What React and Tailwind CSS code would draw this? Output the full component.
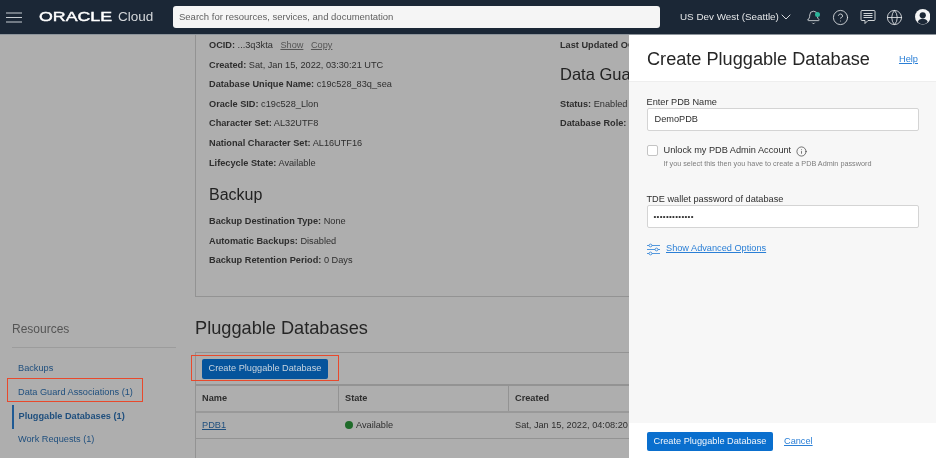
import { Bell, ChevronDown, CircleHelp, Globe, Info } from "lucide-react";

const details = [
  ["Created:", "Sat, Jan 15, 2022, 03:30:21 UTC"],
  ["Database Unique Name:", "c19c528_83q_sea"],
  ["Oracle SID:", "c19c528_Llon"],
  ["Character Set:", "AL32UTF8"],
  ["National Character Set:", "AL16UTF16"],
  ["Lifecycle State:", "Available"],
];

const backup = [
  ["Backup Destination Type:", "None"],
  ["Automatic Backups:", "Disabled"],
  ["Backup Retention Period:", "0 Days"],
];

function Row({ label, children }) {
  return (
    <p className="h-[19.6px] leading-[19.6px] whitespace-nowrap">
      <b className="font-bold">{label}</b> {children}
    </p>
  );
}

function Header() {
  return (
    <header className="h-[35px] shrink-0 flex items-center bg-[#1b2736] text-[#e4e6e8] border-b border-[#8d949b]">
      <svg viewBox="0 0 16 11" className="w-4 h-[11px] ml-[6px]" stroke="#c9ced3" strokeWidth="1">
        <path d="M0 1h16M0 5.5h16M0 10h16" />
      </svg>
      <div className="ml-[17px] w-[73px] text-[12.5px] leading-none text-white scale-x-[1.42] origin-left [-webkit-text-stroke:0.4px_white]">ORACLE</div>
      <div className="ml-[6px] w-[55px] text-[13.5px] text-[#d5d8db]">Cloud</div>
      <div className="w-[487px] h-[22px] bg-[#f5f5f5] rounded-[3px] flex items-center pl-[6px] text-[9.5px] text-[#5f5f5f]">
        Search for resources, services, and documentation
      </div>
      <div className="ml-[20px] w-[98px] text-[9.85px] whitespace-nowrap">US Dev West (Seattle)</div>
      <ChevronDown className="w-[16px] h-[16px]" strokeWidth={1.4} />
      <div className="relative ml-[12px] w-[15px] h-[15px]">
        <Bell className="w-[15px] h-[15px]" strokeWidth={1.3} />
        <span className="absolute top-[2px] right-px w-[5px] h-[5px] rounded-full bg-[#2bb59a]" />
      </div>
      <CircleHelp className="ml-[11px] w-[17px] h-[17px]" strokeWidth={1.2} />
      <svg viewBox="0 0 16 16" className="ml-[10.5px] w-[16px] h-[16px]" fill="none" stroke="currentColor" strokeWidth="0.9">
        <path d="M2 1.5h12a1 1 0 0 1 1 1v8a1 1 0 0 1-1 1H8l-3 3v-3H2a1 1 0 0 1-1-1v-8a1 1 0 0 1 1-1z" />
        <path d="M3.5 4.5h9M3.5 6.5h9M3.5 8.5h9" />
      </svg>
      <Globe className="ml-[10.5px] w-[17px] h-[17px]" strokeWidth={1.2} />
      <svg viewBox="0 0 16 16" className="ml-[11.5px] w-[15.5px] h-[15.5px]">
        <circle cx="8" cy="8" r="8" fill="#f4f5f6" />
        <circle cx="8" cy="6.5" r="3.2" fill="#1b2736" />
        <path d="M2.8 13.4C3.6 10.9 5.6 10 8 10s4.4.9 5.2 3.4A7 7 0 0 1 2.8 13.4z" fill="#1b2736" />
      </svg>
    </header>
  );
}

function Sidebar() {
  return (
    <aside className="w-[195px] shrink-0 pt-[285px] pl-[12px] text-[9.2px] text-[#1f4f7e]">
      <div className="w-[164px] h-[27.5px] border-b border-[#9c9c9c] text-[12px] leading-[18px] text-[#555]">Resources</div>
      <nav className="mt-[10.5px]">
        <div className="h-[23.5px] leading-[21px] pl-[6px]">Backups</div>
        <div className="h-[23.5px] leading-[21px] pl-[6px] whitespace-nowrap">Data Guard Associations (1)</div>
        <div className="h-[23.5px] leading-[23px] pl-[4.5px] border-l-2 border-[#1f5a94] font-bold whitespace-nowrap">Pluggable Databases (1)</div>
        <div className="h-[23.5px] leading-[21px] pl-[6px]">Work Requests (1)</div>
      </nav>
    </aside>
  );
}

function Main() {
  return (
    <main className="w-[434px] shrink-0 overflow-hidden text-[9.2px] text-[#2e2e2e]">
      <section className="h-[262px] border-l border-b border-[#939393] flex pl-[13px] pt-px">
        <div className="w-[351px] shrink-0">
          <Row label="OCID:">
            ...3q3kta <span className="underline ml-[5px] text-[#555]">Show</span> <span className="underline ml-[5px] text-[#555]">Copy</span>
          </Row>
          {details.map(([label, value]) => (
            <Row key={label} label={label}>{value}</Row>
          ))}
          <h3 className="mt-[6px] mb-px h-[32px] text-base leading-[32px] text-[#222]">Backup</h3>
          {backup.map(([label, value]) => (
            <Row key={label} label={label}>{value}</Row>
          ))}
        </div>
        <div className="whitespace-nowrap">
          <Row label="Last Updated OCID:" />
          <h3 className="mt-[3px] mb-[6px] h-[30px] text-[16.5px] leading-[30px] text-[#222]">Data Guard</h3>
          <Row label="Status:">Enabled</Row>
          <Row label="Database Role:">Primary</Row>
        </div>
      </section>
      <h2 className="mt-[19px] h-[24px] text-[18.2px] leading-[24px] text-[#262626]">Pluggable Databases</h2>
      <section className="mt-[12px] h-[106px] border-t border-l border-[#939393]">
        <div className="h-[33px] pl-[6px] pt-[6px] border-b-2 border-[#939393]">
          <button className="w-[126px] h-[20px] rounded-[2px] bg-[#05549c] text-[9.2px] text-[#c8d4df]">Create Pluggable Database</button>
        </div>
        <div className="flex h-[27px] items-center font-bold border-b-2 border-[#999]">
          <div className="w-[143px] shrink-0 h-full flex items-center pl-[6px] border-r border-[#939393]">Name</div>
          <div className="w-[170px] shrink-0 h-full flex items-center pl-[6px] border-r border-[#939393]">State</div>
          <div className="pl-[6px]">Created</div>
        </div>
        <div className="flex h-[26px] items-center border-b border-[#939393] whitespace-nowrap">
          <div className="w-[143px] shrink-0 pl-[6px] underline text-[#1f4f7e]">PDB1</div>
          <div className="w-[170px] shrink-0 pl-[6px] flex items-center gap-[3px]">
            <span className="w-[8px] h-[8px] rounded-full bg-[#1f6b2a]" />
            Available
          </div>
          <div className="pl-[6px]">Sat, Jan 15, 2022, 04:08:20 UTC</div>
        </div>
      </section>
    </main>
  );
}

function Panel() {
  return (
    <aside className="flex-1 min-w-0 flex flex-col bg-white text-[9.2px] text-[#2e2e2e]">
      <div className="h-[46px] shrink-0 flex items-center justify-between px-[18px] pt-[3px]">
        <h2 className="text-[18.15px] text-[#262626] whitespace-nowrap">Create Pluggable Database</h2>
        <a className="underline text-[#2a7fd6] text-[9.25px]">Help</a>
      </div>
      <div className="flex-1 bg-[#f7f7f7] border-t border-[#eee] pl-[17.5px] pr-[17px] pt-[14px]">
        <label className="block h-[12px] leading-[12px]">Enter PDB Name</label>
        <div className="h-[23px] bg-white border border-[#d4d4d4] rounded-[2px] flex items-center pl-[7px]">DemoPDB</div>
        <div className="mt-[14px] flex">
          <span className="w-[11px] h-[11px] bg-white border border-[#c4c4c4] rounded-[2px]" />
          <div className="ml-[6px]">
            <div className="flex items-center h-[12px]">
              <span className="whitespace-nowrap">Unlock my PDB Admin Account</span>
              <Info className="ml-[5px] w-[11px] h-[11px]" strokeWidth={1.4} />
            </div>
            <p className="mt-[2px] text-[7.25px] leading-[10px] text-[#7d7d7d] whitespace-nowrap">If you select this then you have to create a PDB Admin password</p>
          </div>
        </div>
        <label className="block mt-[24px] h-[12px] leading-[12px]">TDE wallet password of database</label>
        <div className="h-[23px] bg-white border border-[#d4d4d4] rounded-[2px] flex items-center pl-[6px] text-[8px] tracking-[0.3px]">•••••••••••••</div>
        <div className="mt-[14px] flex items-center h-[14px]">
          <svg viewBox="0 0 13 13" className="w-[13px] h-[13px]" fill="none" stroke="#2a7fd6" strokeWidth="0.8">
            <path d="M0 2.5h2M5 2.5h8M0 6.5h8M11 6.5h2M0 10.5h2M5 10.5h8" />
            <circle cx="3.5" cy="2.5" r="1.4" />
            <circle cx="9.5" cy="6.5" r="1.4" />
            <circle cx="3.5" cy="10.5" r="1.4" />
          </svg>
          <a className="ml-[6.5px] underline text-[#2a7fd6] whitespace-nowrap">Show Advanced Options</a>
        </div>
      </div>
      <div className="h-[35px] shrink-0 flex items-center pl-[18px] pt-[2px]">
        <button className="w-[126px] h-[19px] rounded-[2px] bg-[#0a6fce] text-[#f2f6fb] text-[9.2px]">Create Pluggable Database</button>
        <a className="ml-[11px] underline text-[#2a7fd6]">Cancel</a>
      </div>
    </aside>
  );
}

export default function App() {
  return (
    <div className="relative w-[936px] h-[458px] overflow-hidden flex flex-col bg-[#aeaeae] font-['Liberation_Sans',Arial,sans-serif] blur-[0.5px]">
      <Header />
      <div className="flex flex-1 min-h-0">
        <Sidebar />
        <Main />
        <Panel />
      </div>
      <span className="absolute left-[7px] top-[378px] w-[136px] h-[24px] border border-[#e8492c]" />
      <span className="absolute left-[191px] top-[355px] w-[148px] h-[26px] border border-[#e8492c]" />
    </div>
  );
}
